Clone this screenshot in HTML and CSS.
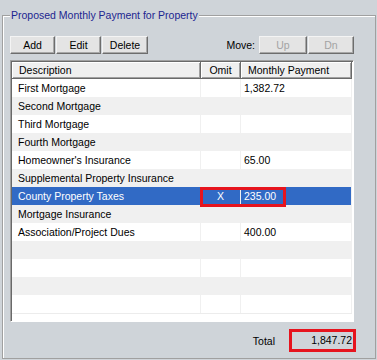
FILE: index.html
```html
<!DOCTYPE html>
<html lang="en">
<head>
  <meta charset="UTF-8">
  <title>Proposed Monthly Payment</title>
  <link rel="stylesheet" href="styles.css">
</head>
<body>

  <div class="group">
    <div class="caption">Proposed Monthly Payment for Property</div>

    <div class="toolbar">
      <button class="btn add">Add</button>
      <button class="btn edit">Edit</button>
      <button class="btn delete">Delete</button>
      <span class="spacer"></span>
      <span class="move">Move:</span>
      <button class="btn up" disabled>Up</button>
      <button class="btn dn" disabled>Dn</button>
    </div>

    <div class="list">
      <div class="row head">
        <div class="cell">Description</div>
        <div class="cell omit">Omit</div>
        <div class="cell">Monthly Payment</div>
      </div>
      <div class="row"><div class="cell">First Mortgage</div><div class="cell omit"></div><div class="cell amount">1,382.72</div></div>
      <div class="row alt"><div class="cell">Second Mortgage</div><div class="cell omit"></div><div class="cell amount"></div></div>
      <div class="row"><div class="cell">Third Mortgage</div><div class="cell omit"></div><div class="cell amount"></div></div>
      <div class="row alt"><div class="cell">Fourth Mortgage</div><div class="cell omit"></div><div class="cell amount"></div></div>
      <div class="row"><div class="cell">Homeowner's Insurance</div><div class="cell omit"></div><div class="cell amount">65.00</div></div>
      <div class="row alt"><div class="cell">Supplemental Property Insurance</div><div class="cell omit"></div><div class="cell amount"></div></div>
      <div class="row selected">
        <div class="cell">County Property Taxes</div><div class="cell omit">X</div><div class="cell amount">235.00</div>
        <span class="mark"></span>
      </div>
      <div class="row alt"><div class="cell">Mortgage Insurance</div><div class="cell omit"></div><div class="cell amount"></div></div>
      <div class="row"><div class="cell">Association/Project Dues</div><div class="cell omit"></div><div class="cell amount">400.00</div></div>
      <div class="row alt"><div class="cell"></div><div class="cell omit"></div><div class="cell amount"></div></div>
      <div class="row"><div class="cell"></div><div class="cell omit"></div><div class="cell amount"></div></div>
      <div class="row alt"><div class="cell"></div><div class="cell omit"></div><div class="cell amount"></div></div>
      <div class="row last"><div class="cell"></div><div class="cell omit"></div><div class="cell amount"></div></div>
    </div>

    <div class="totals">
      <span class="total-label">Total</span>
      <span class="total-value">1,847.72</span>
    </div>
  </div>

</body>
</html>
```

FILE: styles.css
```css
body {
  margin: 0;
  background: #cfd4d9;
  font-family: "Liberation Sans", Arial, sans-serif;
  font-size: 10.5px;
  color: #000;
  overflow: hidden;
}

.group {
  box-sizing: border-box;
  margin: 15px 0 0 2px;
  width: 374px;
  height: 344px;
  padding: 0 21px 0 7px;
  border: 1px solid #a0a0a0;
  box-shadow: inset 1px 1px #fff;
}

.caption {
  width: fit-content;
  margin: -8px 0 0 0;
  padding: 0 1px;
  background: #cfd4d9;
  color: #1c2590;
  line-height: 14px;
}

.toolbar {
  display: flex;
  align-items: center;
  gap: 1px;
  margin-top: 14px;
}

.btn {
  box-sizing: border-box;
  height: 18px;
  padding: 0;
  font: inherit;
  color: #000;
  background: #e4e4e4;
  border: 1px solid;
  border-color: #f4f4f4 #6d6d6d #6d6d6d #f4f4f4;
  box-shadow: inset -1px -1px #a8a8a8;
}

.btn:disabled {
  color: #a3a3a3;
}

.add { width: 45px; }
.edit { width: 45px; }
.delete { width: 46px; }
.up { width: 48px; }
.dn { width: 46px; }

.spacer { flex: 1; }

.move {
  margin-right: 3px;
}

.list {
  box-sizing: border-box;
  height: 262px;
  margin-top: 6px;
  background: #fff;
  border: 1px solid;
  border-color: #a0a0a0 #fff #fff #a0a0a0;
  box-shadow: inset 1px 1px #696969;
  padding: 1px 1px 0 1px;
  overflow: hidden;
}

.row {
  display: grid;
  grid-template-columns: 189px 40px 111px;
  height: 18px;
  line-height: 18px;
  background: #fff;
}

.row.alt { background: #f0f0f0; }

.row.last { border-bottom: 1px solid #ececec; }

.cell {
  padding-left: 6px;
  border-right: 1px solid #f0f0f0;
  white-space: nowrap;
  overflow: hidden;
}

.cell.omit {
  padding-left: 0;
  text-align: center;
}

.cell.amount { padding-left: 3px; }

.row.head {
  height: 17px;
  line-height: 16px;
  background: #efefef;
}

.head .cell {
  padding-left: 7px;
  border-right: 1px solid #696969;
  border-bottom: 1px solid #696969;
  box-shadow: inset 1px 1px #fff, inset -1px -1px #a0a0a0;
}

.head .cell.omit { padding-left: 0; }

.row.selected {
  position: relative;
  background: #316ac5;
  color: #fff;
}

.mark {
  position: absolute;
  left: 188px;
  top: 0;
  width: 86px;
  height: 20px;
  box-sizing: border-box;
  border: 3px solid #e6141e;
  z-index: 1;
}

.totals {
  display: flex;
  align-items: center;
  justify-content: flex-end;
  gap: 14px;
  margin: 7px -2px 0 0;
}

.total-value {
  box-sizing: border-box;
  width: 67px;
  height: 23px;
  line-height: 17px;
  padding-right: 1px;
  text-align: right;
  border: 3px solid #e6141e;
}
```
